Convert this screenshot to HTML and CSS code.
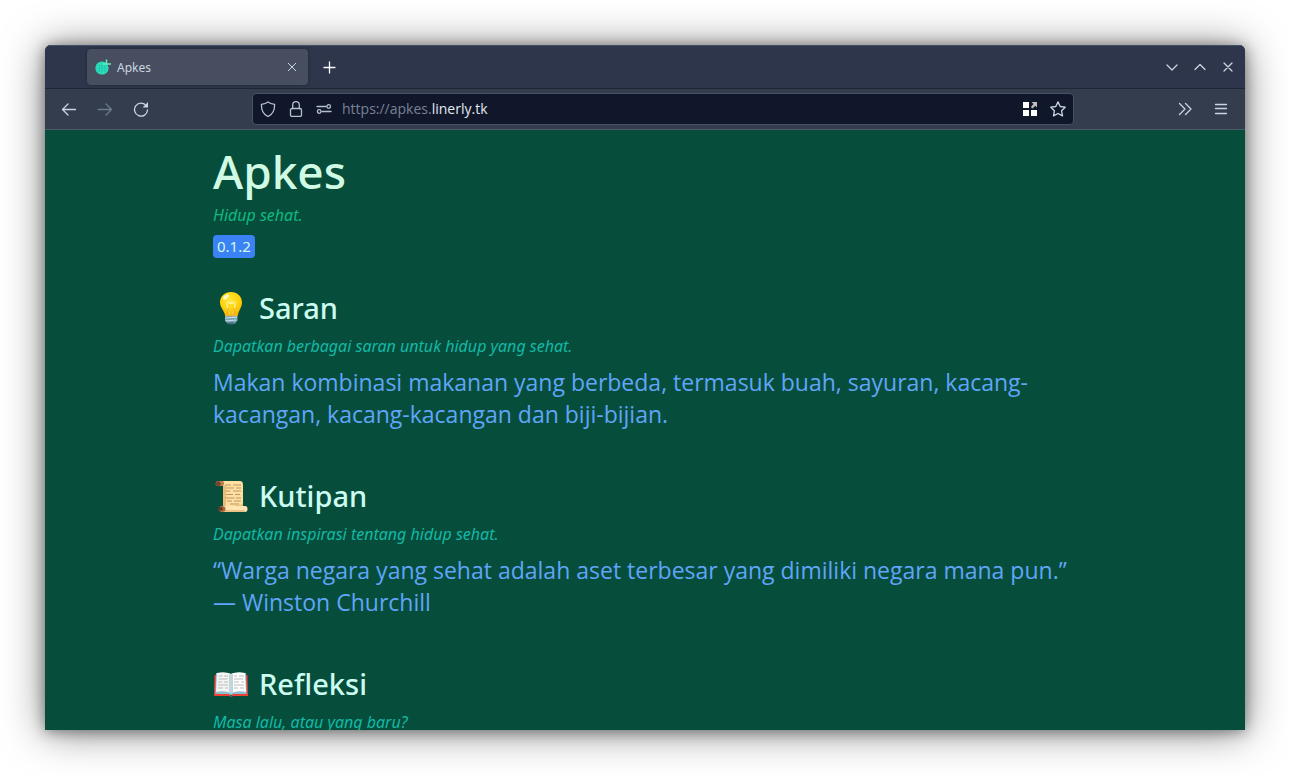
FILE: index.html
```html
<!DOCTYPE html>
<html lang="id">
<head>
<meta charset="utf-8">
<meta name="viewport" content="width=device-width, initial-scale=1">
<title>Apkes</title>
<link rel="stylesheet" href="styles.css">
</head>
<body>
<div class="window">
  <header class="tabbar">
    <div class="tab">
      <svg class="favicon" viewBox="0 0 16 16" aria-hidden="true">
        <circle cx="7" cy="9" r="6.6" fill="#2fe3bd"/>
        <path d="M1 6.8h12M.6 9.2h12.8M1.4 11.8h11.2M4.4 3v12M7 2.6v13M9.8 3v12" stroke="#14b8a6" stroke-width=".5" fill="none"/>
        <path d="M8 5h8M11.5.5v5" stroke="#6ee7b7" stroke-width="1.5" fill="none"/>
      </svg>
      <span class="tab-title">Apkes</span>
      <button class="icon-button tab-close" type="button" aria-label="Tutup tab">
        <svg class="icon" viewBox="0 0 16 16"><path d="M4 4l8 8M12 4l-8 8"/></svg>
      </button>
    </div>
    <button class="icon-button bright" type="button" aria-label="Tab baru">
      <svg class="icon" viewBox="0 0 16 16"><path class="heavy" d="M7.500 3v11M2 8.500h11"/></svg>
    </button>
    <div class="window-controls">
      <button class="icon-button" type="button" aria-label="Minimalkan">
        <svg class="icon" viewBox="0 0 16 16"><path class="heavy" d="M3 6l5 5 5-5"/></svg>
      </button>
      <button class="icon-button" type="button" aria-label="Maksimalkan">
        <svg class="icon" viewBox="0 0 16 16"><path class="heavy" d="M3 10.5l5-5 5 5"/></svg>
      </button>
      <button class="icon-button" type="button" aria-label="Tutup">
        <svg class="icon" viewBox="0 0 16 16"><path class="heavy" d="M4 4l8 8M12 4l-8 8"/></svg>
      </button>
    </div>
  </header>
  <nav class="toolbar" aria-label="Navigasi">
    <div class="nav-buttons">
      <button class="icon-button" type="button" aria-label="Kembali">
        <svg class="icon" viewBox="0 0 16 16"><path class="heavy" d="M14.500 8.500H1.800M7 3L1.500 8.500 7 14"/></svg>
      </button>
      <button class="icon-button" type="button" aria-label="Maju" disabled>
        <svg class="icon" viewBox="0 0 16 16"><path class="heavy" d="M1 8.500h13.200M9 3l5.500 5.500L9 14"/></svg>
      </button>
      <button class="icon-button" type="button" aria-label="Muat ulang">
        <svg class="icon" viewBox="0 0 16 16"><path class="heavy" d="M13.400 5A6.500 6.500 0 1 0 14.500 9"/><path class="solid" d="M15 1v5.400H9.600z"/></svg>
      </button>
    </div>
    <div class="address">
      <svg class="icon" viewBox="0 0 16 16" aria-hidden="true"><path class="heavy" d="M8 .9C6 2.400 3.800 3 1.400 3.400 1.300 9 3 13.500 8 15.500c5-2 6.700-6.500 6.600-12.100C12.200 3 10 2.400 8 .900z"/></svg>
      <svg class="icon" viewBox="0 0 16 16" aria-hidden="true"><rect class="heavy" x="2.500" y="7.500" width="11" height="8" rx="1.500"/><path class="heavy" d="M4.700 7.500V4a3.300 3.300 0 0 1 6.600 0v3.500"/></svg>
      <svg class="icon" viewBox="0 0 16 16" aria-hidden="true"><path class="heavy" d="M1 5.500h9M6 10.500h9"/><circle class="heavy" cx="12.700" cy="5.500" r="1.800"/><circle class="heavy" cx="3.200" cy="10.500" r="1.800"/></svg>
      <div class="url"><span class="dim">https://apkes.</span>linerly.tk</div>
      <button class="icon-button bright" type="button" aria-label="Ekstensi">
        <svg class="icon" viewBox="0 0 16 16"><path class="solid" d="M1 1h6v6H1zM1 9h6v6H1zM9 9h6v6H9z"/><path class="pale" d="M9.500 1H15v5.500l-1.700-1.700L10.500 7.500 8.900 5.900l2.600-2.800z"/></svg>
      </button>
      <button class="icon-button" type="button" aria-label="Markahi halaman">
        <svg class="icon" viewBox="0 0 16 16"><path class="heavy" d="M8 .9l2.200 4.600 5 .700-3.600 3.600.9 5.100L8 12.500l-4.500 2.400.9-5.100L.8 6.200l5-.700z"/></svg>
      </button>
    </div>
    <div class="menu-buttons">
      <button class="icon-button" type="button" aria-label="Lainnya">
        <svg class="icon" viewBox="0 0 16 16"><path class="heavy" d="M2.500 2.500L8 8l-5.500 5.500M8.500 2.500L14 8l-5.500 5.500"/></svg>
      </button>
      <button class="icon-button" type="button" aria-label="Menu">
        <svg class="icon" viewBox="0 0 16 16"><path class="heavy" d="M2.500 3.500h11M2.500 7.500h11M2.500 12.500h11"/></svg>
      </button>
    </div>
  </nav>
  <main class="page">
    <div class="content">
      <h1 class="title">Apkes</h1>
      <p class="tagline">Hidup sehat.</p>
      <span class="version">0.1.2</span>

      <section class="section">
        <h2 class="heading">
          <svg class="emoji" viewBox="0 0 36 36" aria-hidden="true">
            <defs><radialGradient id="glow" cx=".45" cy=".35" r=".65"><stop offset="0" stop-color="#ffe93b"/><stop offset=".6" stop-color="#fdd410"/><stop offset="1" stop-color="#f9b800"/></radialGradient></defs>
            <path d="M18 2C11.500 2 7 6.500 7 12.500c0 5 4 7.500 5 12.500h13c.7-5 4-7.500 4-12.500C29 6.500 24.500 2 18 2z" fill="url(#glow)"/>
            <path d="M16 24l-2-9c-1-4 2-4 3-1 1-3 2-3 2 0 1-3 4-3 3 1l-2 9" fill="none" stroke="#fff9c4" stroke-width="1"/>
            <path d="M15 24v-6M21 24v-6" stroke="#e69a12" fill="none"/>
            <ellipse cx="13" cy="7" rx="3.500" ry="1.800" transform="rotate(-40 13 7)" fill="#fff" opacity=".75"/>
            <path d="M12 25h12.500v5.500l-3 3.500h-6.500l-3-3.500z" fill="#7ba3b5"/>
            <path d="M12 25.500h12.500" stroke="#e8b53a" stroke-width="1.500"/>
            <path d="M12 28l12-.8M12.500 31l11-1" stroke="#c3dce8" stroke-width="1.200"/>
            <path d="M14 32.500h8l-2 2h-4z" fill="#416378"/>
          </svg>
          Saran
        </h2>
        <p class="hint">Dapatkan berbagai saran untuk hidup yang sehat.</p>
        <p class="message">Makan kombinasi makanan yang berbeda, termasuk buah, sayuran, kacang-kacangan, kacang-kacangan dan biji-bijian.</p>
      </section>

      <section class="section">
        <h2 class="heading">
          <svg class="emoji" viewBox="0 0 36 36" aria-hidden="true">
            <path d="M5 3h22q3 0 3 4v22H10V8z" fill="#ffdf9f"/>
            <path d="M10 8v20h3V7z" fill="#edbd78"/>
            <path d="M4 3h6q2 2 0 5H4q-3-2 0-5z" fill="#b97d4b"/>
            <path d="M2 5l4-2 2 3-3 3z" fill="#71442b"/>
            <path d="M12 7h6M20 7h8M13 10h8M23 10h5M12.500 13h5M20 13h8M13 16.500h7M22 16.500h5M12.500 20h9M23 20h5M14 23h5M21 23h7M17 26h9" stroke="#bd946a" stroke-width="1"/>
            <path d="M30 23q1 4-5 4l-12 2h17z" fill="#edbd78"/>
            <path d="M8 28h24q2.500 0 2.500 3T32 34H8z" fill="#ffe5b4"/>
            <path d="M9 33h23" stroke="#e6b678" stroke-width="1.500"/>
            <ellipse cx="9" cy="31" rx="3.500" ry="3" fill="#a86739"/>
            <path d="M5 29l4 0 1 3-5 1z" fill="#603b28"/>
          </svg>
          Kutipan
        </h2>
        <p class="hint">Dapatkan inspirasi tentang hidup sehat.</p>
        <p class="message">“Warga negara yang sehat adalah aset terbesar yang dimiliki negara mana pun.”<br>— Winston Churchill</p>
      </section>

      <section class="section">
        <h2 class="heading">
          <svg class="emoji" viewBox="0 0 36 36" aria-hidden="true">
            <path d="M1.500 9H34.500l.5 21H20l-2 1-2-1H1z" fill="#ed4134"/>
            <path d="M3 7h14l1 3 1-3h14l.7 21H20l-2 2-2-2H2.300z" fill="#8abbd0"/>
            <path d="M4 7q8-2 14 1v19q-7-3-15-1z" fill="#f3f5f5"/>
            <path d="M32 7q-8-2-14 1v19q7-3 15-1z" fill="#fff"/>
            <path d="M16 7.500q2 0 2 2 0-2 2-2V26l-2 2-2-2z" fill="#c2d4dc"/>
            <path d="M5.500 10h4M11 10h4M5.500 13h9M5 16h4M11 16h4M5 19h10M5 22h5M12 22h3M21 10h3M26 10h5M21 13h9M21 16h5M28 16h3M21 19h10M21 22h4M27 22h4" stroke="#bbb" stroke-width="1"/>
            <path d="M16.500 29h3l-1.500 2z" fill="#355763"/>
          </svg>
          Refleksi
        </h2>
        <p class="hint">Masa lalu, atau yang baru?</p>
      </section>
    </div>
  </main>
</div>
</body>
</html>
```
FILE: styles.css
```css
* {
  box-sizing: border-box;
}

body {
  margin: 0;
  height: 100vh;
  padding: 45px;
  background: #fff;
  font-family: "Noto Sans", sans-serif;
}

h1, h2, p {
  margin: 0;
}

.window {
  display: flex;
  flex-direction: column;
  height: 100%;
  overflow: hidden;
  border-radius: 6px 6px 0 0;
  background: #064e3b;
  box-shadow: 0 2px 40px rgba(0, 0, 0, 0.5), 0 1px 14px rgba(0, 0, 0, 0.4);
}

.icon {
  display: block;
  flex: none;
  width: 16px;
  height: 16px;
  fill: none;
  stroke: currentColor;
  stroke-width: 1;
}

.icon .heavy {
  stroke-width: 1.3;
  stroke-linejoin: round;
  stroke-linecap: round;
}

.icon .solid {
  fill: currentColor;
  stroke: none;
}

.icon .pale {
  fill: #c3bdbd;
  stroke: none;
}

.icon-button {
  flex: none;
  padding: 0;
  border: 0;
  background: none;
  color: #cbd5e1;
}

.icon-button:disabled {
  color: #6d7889;
}

.icon-button.bright {
  color: #fff;
}

.tabbar {
  display: flex;
  flex: none;
  align-items: center;
  height: 44px;
  padding: 0 9px 0 42px;
  border-top: 1px solid #40506a;
  border-bottom: 1px solid #1e2534;
  background: #2d364a;
}

.tab {
  display: flex;
  align-items: center;
  width: 221px;
  height: 36px;
  margin-right: 14px;
  padding: 0 8px;
  border-radius: 4px;
  background: #474e5f;
  box-shadow: 0 0 3px rgba(0, 0, 0, 0.35);
}

.favicon {
  flex: none;
  width: 16px;
  height: 16px;
}

.tab-title {
  flex: 1;
  margin-left: 6px;
  padding-top: 2px;
  color: #cbd5e1;
  font-size: 12px;
  line-height: 16px;
}

.window-controls {
  display: flex;
  gap: 12px;
  margin-left: auto;
}

.toolbar {
  display: flex;
  flex: none;
  align-items: center;
  height: 41px;
  padding: 0 16px;
  border-bottom: 1px solid #4b586a;
  background: #333d4e;
}

.nav-buttons {
  display: flex;
  gap: 20px;
  flex: 1 1 auto;
}

.address {
  display: flex;
  flex: 0 1 822px;
  align-items: center;
  gap: 12px;
  height: 32px;
  padding: 0 7px;
  border: 1px solid #475166;
  border-radius: 4px;
  background: #11172a;
  color: #b6bfd0;
}

.url {
  flex: 1;
  margin-left: -2px;
  color: #e2e8f0;
  font-family: "Open Sans", "Noto Sans", sans-serif;
  font-size: 14px;
  line-height: 20px;
}

.dim {
  color: #788296;
}

.menu-buttons {
  display: flex;
  flex: 1 1 auto;
  justify-content: flex-end;
  gap: 20px;
}

.page {
  flex: 1;
  min-height: 0;
  overflow: hidden;
  background: #064e3b;
}

.content {
  max-width: 896px;
  margin: 0 auto;
  padding: 17px 16px;
}

.title {
  color: #d1fae5;
  font-size: 46px;
  font-weight: 500;
  line-height: 48px;
}

.tagline {
  margin-top: 8px;
  color: #10b981;
  font-size: 16px;
  font-style: italic;
  line-height: 24px;
}

.version {
  display: inline-block;
  margin-top: 8px;
  padding: 0 4px;
  border-radius: 4px;
  background: #3b82f6;
  color: #d1fae5;
  font-size: 15px;
  line-height: 23px;
}

.section {
  margin-bottom: 48px;
}

.version + .section {
  margin-top: 32px;
}

.heading {
  display: flex;
  align-items: center;
  gap: 10px;
  color: #ccfbf1;
  font-size: 29px;
  font-weight: 500;
  line-height: 36px;
}

.emoji {
  flex: none;
  width: 36px;
  height: 36px;
}

.hint {
  margin-top: 8px;
  color: #14b8a6;
  font-size: 16px;
  font-style: italic;
  line-height: 24px;
}

.message {
  margin-top: 8px;
  color: #60a5fa;
  font-family: "Open Sans", "Noto Sans", sans-serif;
  font-size: 23px;
  line-height: 32px;
}
```
